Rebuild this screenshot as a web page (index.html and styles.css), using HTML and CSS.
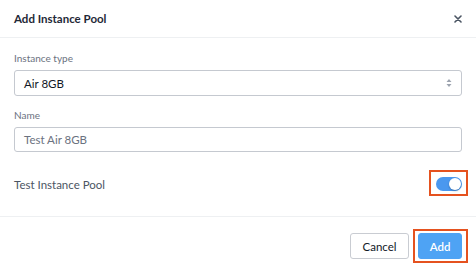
FILE: index.html
```html
<!DOCTYPE html>
<html>
<head>
<meta charset="utf-8">
<link rel="stylesheet" href="styles.css">
</head>
<body>
<div class="modal">
  <div class="header">
    <div class="title">Add Instance Pool</div>
    <svg class="close" width="8" height="8" viewBox="0 0 8 8"><path d="M1 1L7 7M7 1L1 7" stroke="#4b5563" stroke-width="1.6" stroke-linecap="round"/></svg>
  </div>
  <div class="body">
    <div class="field">
      <div class="label">Instance type</div>
      <div class="control select">
        <span>Air 8GB</span>
        <svg class="arrows" width="6" height="10" viewBox="0 0 6 10"><path d="M3 1L5.5 4H0.5Z M3 9L0.5 6H5.5Z" fill="#9ca3af"/></svg>
      </div>
    </div>
    <div class="field">
      <div class="label">Name</div>
      <div class="control input"><span>Test Air 8GB</span></div>
    </div>
    <div class="toggle-row">
      <div class="toggle-label">Test Instance Pool</div>
      <div class="toggle hl"><div class="knob"></div></div>
    </div>
  </div>
  <div class="footer">
    <button class="btn cancel">Cancel</button>
    <button class="btn add hl-btn">Add</button>
  </div>
</div>
</body>
</html>
```
FILE: styles.css
```css
* { box-sizing: border-box; }
html, body { margin: 0; padding: 0; background: #fff; }
body { font-family: Lato, "Open Sans", sans-serif; color: #1f2937; width: 476px; height: 274px; overflow: hidden; }
.modal { width: 476px; }
.header { height: 38px; display: flex; align-items: center; justify-content: space-between; padding: 0 14px; border-bottom: 1px solid #eef0f2; }
.title { font-size: 11.5px; font-weight: 700; color: #1f2937; }
.body { padding: 13px 14px 0 14px; }
.field { margin-bottom: 12px; }
.label { font-size: 10px; line-height: 14px; color: #6b7280; margin-bottom: 5px; }
.control { height: 26px; border: 1px solid #c5c9d0; border-radius: 3px; display: flex; align-items: center; justify-content: space-between; padding: 0 9px; font-size: 11.5px; }
.select { color: #111827; }
.input { color: #6b7280; height: 25px; }
.toggle-row { display: flex; align-items: center; justify-content: space-between; height: 36px; margin-top: 14px; margin-bottom: 14px; }
.toggle-label { font-size: 11.5px; color: #4b5563; }
.toggle { width: 26px; height: 14px; border-radius: 7px; background: #4a98ef; position: relative; }
.knob { position: absolute; right: 1px; top: 1px; width: 12px; height: 12px; border-radius: 50%; background: #fff; box-shadow: 0 1px 2px rgba(0,0,0,0.25); }
.hl::after { content: ""; position: absolute; left: -7px; right: -6px; top: -7px; bottom: -5px; border: 2px solid #e5521f; }
.footer { border-top: 1px solid #eef0f2; display: flex; justify-content: flex-end; gap: 9px; padding: 16px 14px 0 14px; }
.btn { font-family: Lato, "Open Sans", sans-serif; font-size: 11.5px; height: 26px; border-radius: 3px; cursor: pointer; }
.cancel { width: 59px; background: #fff; border: 1px solid #c9ccd2; color: #111827; }
.add { width: 44px; background: #4ea3f4; border: 1px solid #4ea3f4; color: #fff; font-weight: 600; position: relative; }
.hl-btn::after { content: ""; position: absolute; left: -6px; right: -7px; top: -5px; bottom: -5px; border: 2px solid #e5521f; }
```
